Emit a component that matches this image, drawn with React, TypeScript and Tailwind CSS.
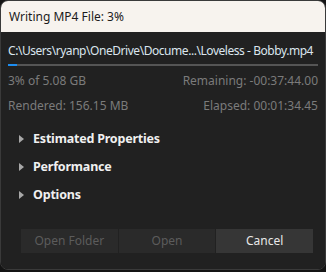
export default function App() {
  const font = { fontFamily: '"Noto Sans", "Open Sans", sans-serif' };
  const sections = ["Estimated Properties", "Performance", "Options"];

  return (
    <div className="w-[326px] h-[272px] bg-[#141414] overflow-hidden" style={font}>
      <div className="w-[326px] h-[270px] rounded-[8px] overflow-hidden flex flex-col border border-[#3a3a3a]">
        {/* title bar */}
        <div className="h-[31px] shrink-0 bg-[#f7f3ee] flex items-center pl-[8px] text-[12px] text-[#1b1b1b]">
          Writing MP4 File: 3%
        </div>

        <div className="flex-1 bg-[#212121] px-[7px] flex flex-col">
          <div className="mt-[10px] text-[12px] leading-[17px] text-[#dbe5ee] whitespace-nowrap tracking-[-0.45px]">
            C:\Users\ryanp\OneDrive\Docume...\Loveless - Bobby.mp4
          </div>
          <div className="mt-[5px] h-[2px] bg-[#555555]">
            <div className="h-full w-[9px] bg-[#1d8df0]" />
          </div>

          <div className="mt-[7px] flex justify-between text-[12px] leading-[16px] text-[#7b7b7b]">
            <span>3% of 5.08 GB</span>
            <span>Remaining: -00:37:44.00</span>
          </div>
          <div className="mt-[9px] flex justify-between text-[12px] leading-[16px] text-[#7b7b7b]">
            <span>Rendered: 156.15 MB</span>
            <span>Elapsed: 00:01:34.45</span>
          </div>

          <div className="mt-[17px] flex flex-col gap-[12px] pl-[11px]">
            {sections.map((s) => (
              <div key={s} className="flex items-center gap-[9px] h-[16px]">
                <svg width="5" height="8" viewBox="0 0 5 8">
                  <path d="M0 0 L5 4 L0 8 Z" fill="#a8a8a8" />
                </svg>
                <span className="text-[12.5px] font-bold text-[#f0f0f0] leading-[16px] tracking-[-0.2px]">{s}</span>
              </div>
            ))}
          </div>

          <div className="mt-[26px] ml-[13px] flex gap-[1px] w-[292px]">
            <button className="flex-1 h-[24px] bg-[#2a2a2a] text-[12px] text-[#5c5c5c]">Open Folder</button>
            <button className="flex-1 h-[24px] bg-[#2a2a2a] text-[12px] text-[#5c5c5c]">Open</button>
            <button className="flex-1 h-[24px] bg-[#363636] text-[12px] text-[#e8e8e8]">Cancel</button>
          </div>
        </div>
      </div>
    </div>
  );
}
